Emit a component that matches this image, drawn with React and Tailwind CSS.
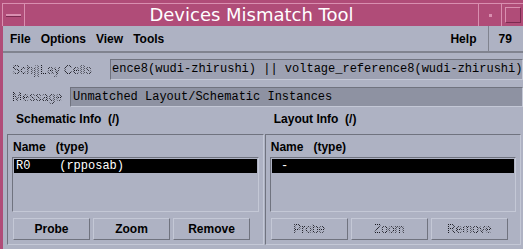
import React from 'react';

// stippled "insensitive" text like old Motif widgets
const stipple =
  'text-transparent bg-clip-text bg-[repeating-conic-gradient(#1a1a22_0_25%,transparent_0_50%)] bg-[length:2px_2px]';

const Btn = ({ label, disabled }) => (
  <div className="w-[77px] h-[22px] flex items-center justify-center border border-t-[#c4c8d6] border-l-[#c4c8d6] border-b-[#70737f] border-r-[#70737f] text-[12px]">
    <span className={disabled ? stipple : 'text-black font-bold'}>{label}</span>
  </div>
);

const Panel = ({ title, row, disabled }) => (
  <div className="flex-1 flex flex-col">
    <div className="h-[27px] pt-[5px] pl-[9px] text-[12px] leading-[14px] font-bold text-black whitespace-pre">{title}</div>
    <div className="flex-1 border border-t-[#70737f] border-l-[#70737f] border-b-[#c4c8d6] border-r-[#c4c8d6] px-[4px] pt-[5px] flex flex-col">
      <div className="text-[12px] font-bold text-black leading-[14px] pl-[1px] whitespace-pre">Name   (type)</div>
      <div className="h-[55px] mt-[3px] border border-t-[#70737f] border-l-[#70737f] border-b-[#c4c8d6] border-r-[#c4c8d6] p-[1px]">
        <div className="h-[14px] bg-black text-white font-['Liberation_Mono'] text-[12px] leading-[14px] pl-[2px] whitespace-pre">{row}</div>
      </div>
      <div className="flex gap-[3px] mt-[6px] pl-[1px]">
        <Btn label="Probe" disabled={disabled} />
        <Btn label="Zoom" disabled={disabled} />
        <Btn label="Remove" disabled={disabled} />
      </div>
    </div>
  </div>
);

export default function App() {
  return (
    <div className="w-[523px] h-[249px] bg-[#b04c78] flex flex-col overflow-hidden font-['Liberation_Sans',sans-serif]">
      {/* title bar */}
      <div className="h-[26px] flex pt-[3px] pl-[2px]">
        <div className="flex-1 flex border-t border-l border-[#d98fb0]">
          <div className="w-[22px] flex items-center justify-center border-r border-[#d98fb0]">
            <div className="w-[15px] h-[3px] bg-[#d98fb0] border-b border-[#7a2a50]" />
          </div>
          <div className="flex-1 flex items-center justify-center text-white text-[18px] font-['DejaVu_Sans',sans-serif] leading-none">
            Devices Mismatch Tool
          </div>
          <div className="w-[23px] flex items-center justify-center border-l border-[#d98fb0]">
            <div className="w-[3px] h-[3px] bg-[#d98fb0]" />
          </div>
          <div className="w-[22px] flex items-center justify-center border-l border-[#d98fb0]">
            <div className="w-[16px] h-[16px] border border-t-[#d98fb0] border-l-[#d98fb0] border-b-[#7a2a50] border-r-[#7a2a50]" />
          </div>
        </div>
      </div>

      <div className="flex-1 flex pl-[3px]">
        <div className="flex-1 bg-[#aeb2c3] flex flex-col">
          {/* menu bar */}
          <div className="h-[27px] flex items-stretch border-b-2 border-b-[#80838f]">
            <div className="flex-1 flex items-center gap-[10px] pl-[7px] text-[12px] font-bold text-black">
              <span>File</span>
              <span>Options</span>
              <span>View</span>
              <span>Tools</span>
              <span className="ml-auto mr-[12px]">Help</span>
            </div>
            <div className="w-[35px] border-l border-l-[#80838f] flex items-center pl-[9px] text-[12px] font-bold text-black">79</div>
          </div>

          {/* cells row */}
          <div className="flex items-center mt-[6px] h-[21px]">
            <div className="w-[107px] pl-[9px] text-[12px] tracking-[0.3px]">
              <span className={stipple}>Schj|Lay Cells</span>
            </div>
            <div className="flex-1 h-[21px] bg-[#9da1b2] border border-t-[#70737f] border-l-[#70737f] border-b-[#c4c8d6] border-r-[#c4c8d6] overflow-hidden font-['Liberation_Mono',monospace] text-[12px] leading-[19px] pl-[1px] whitespace-pre text-black">
              ence8(wudi-zhirushi) || voltage_reference8(wudi-zhirushi)
            </div>
          </div>

          {/* message row */}
          <div className="flex items-center mt-[7px] h-[20px]">
            <div className="w-[67px] pl-[9px] text-[12px] tracking-[0.3px]">
              <span className={stipple}>Message</span>
            </div>
            <div className="flex-1 h-[20px] bg-[#8e92a2] border border-t-[#70737f] border-l-[#70737f] border-b-[#c4c8d6] border-r-[#c4c8d6] overflow-hidden font-['Liberation_Mono',monospace] text-[12px] leading-[18px] pl-[2px] whitespace-pre text-black">
              Unmatched Layout/Schematic Instances
            </div>
          </div>

          {/* panels */}
          <div className="flex-1 flex gap-[1px] pl-[4px] pr-[2px] pb-[4px]">
            <Panel title="Schematic Info  (/)" row="R0    (rpposab)" />
            <Panel title="Layout Info  (/)" row=" -" disabled />
          </div>
        </div>
        <div className="w-[4px] bg-[#e6a6c6]" />
      </div>
    </div>
  );
}
